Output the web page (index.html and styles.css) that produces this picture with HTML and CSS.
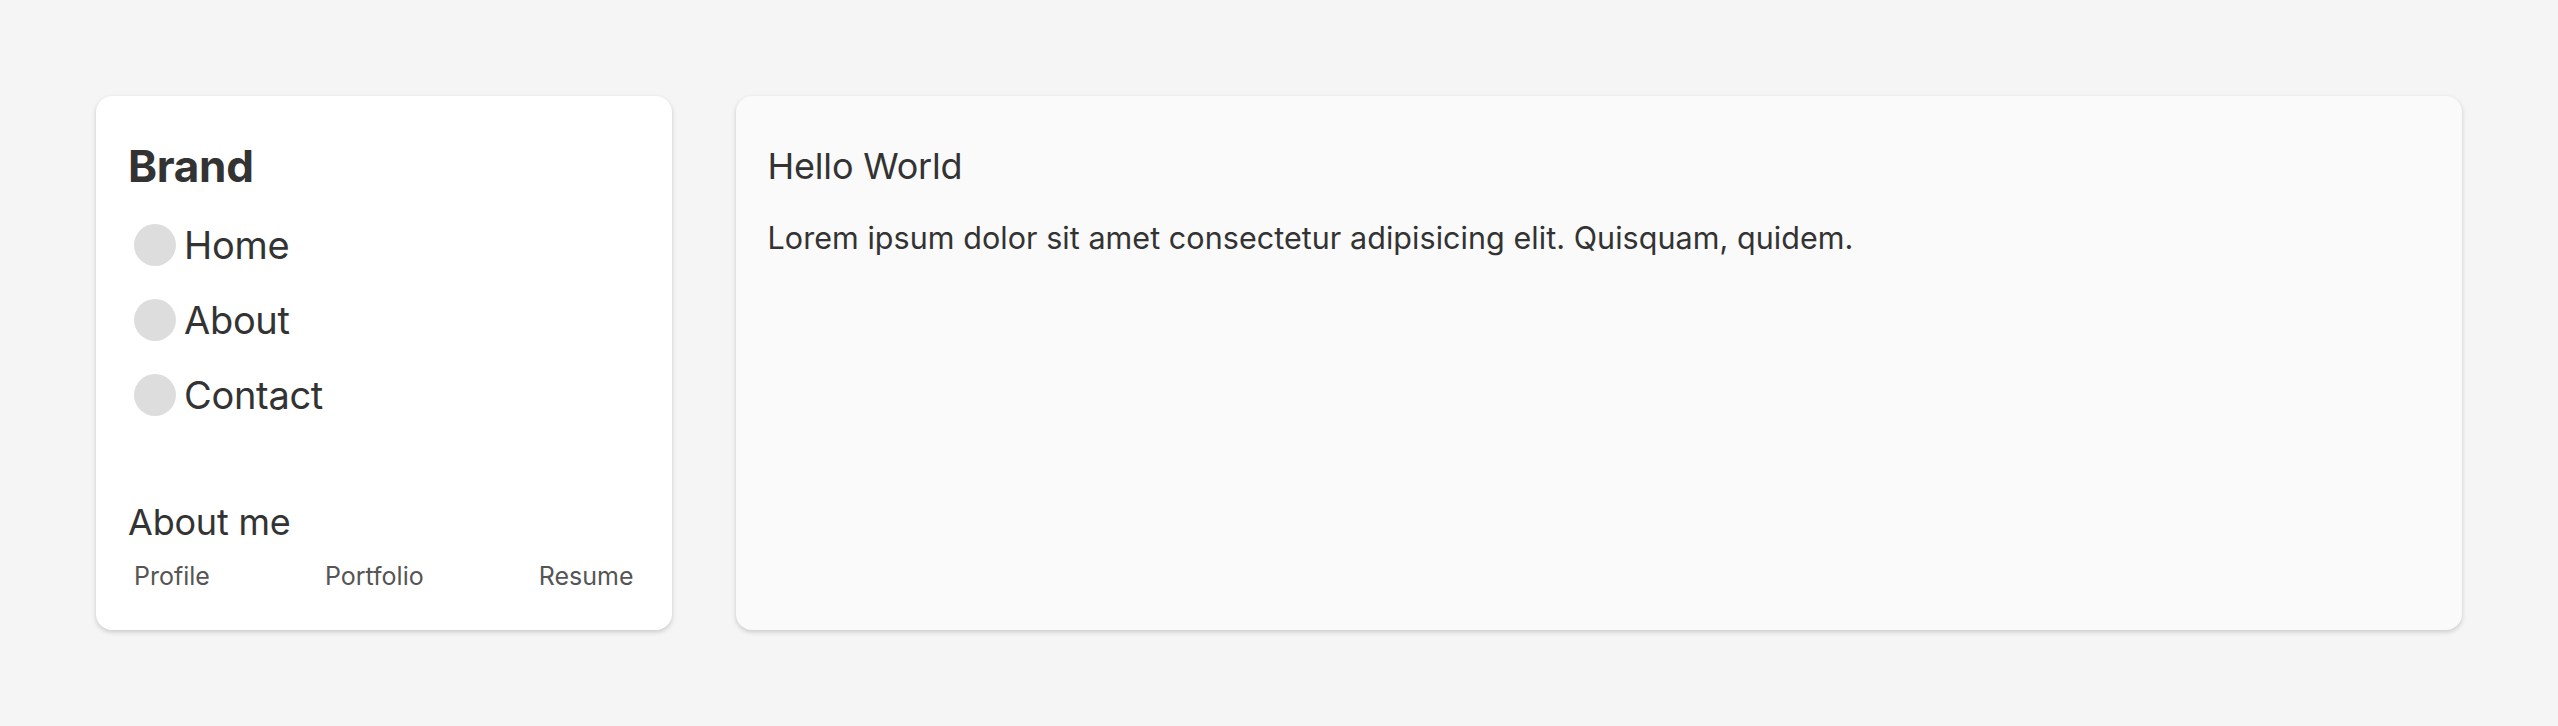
FILE: index.html
```html
<!DOCTYPE html>
<html lang="en">
<head>
<meta charset="utf-8">
<title>Brand</title>
<link rel="stylesheet" href="styles.css">
</head>
<body>
<div class="layout">
  <aside class="sidebar card">
    <div class="top">
      <h1 class="brand">Brand</h1>
      <ul class="nav">
        <li class="nav-item"><span class="dot"></span><span class="nav-label">Home</span></li>
        <li class="nav-item"><span class="dot"></span><span class="nav-label">About</span></li>
        <li class="nav-item"><span class="dot"></span><span class="nav-label">Contact</span></li>
      </ul>
    </div>
    <div class="about">
      <h2 class="about-title">About me</h2>
      <div class="links">
        <a class="link">Profile</a>
        <a class="link">Portfolio</a>
        <a class="link">Resume</a>
      </div>
    </div>
  </aside>
  <main class="main card">
    <h2 class="title">Hello World</h2>
    <p class="text">Lorem ipsum dolor sit amet consectetur adipisicing elit. Quisquam, quidem.</p>
  </main>
</div>
</body>
</html>
```

FILE: styles.css
```css
* { box-sizing: border-box; }
html, body { margin: 0; padding: 0; }
body {
  background: #f5f5f5;
  font-family: Inter, "Noto Sans", "Liberation Sans", sans-serif;
  color: #333333;
  height: 726px;
}
.layout {
  display: grid;
  grid-template-columns: 1fr 3fr;
  gap: 64px;
  padding: 96px;
  height: 726px;
}
.card {
  border-radius: 16px;
  box-shadow: 0 2px 5px rgba(0, 0, 0, 0.18);
  padding: 32px;
}
.sidebar {
  background: #ffffff;
  display: flex;
  flex-direction: column;
  justify-content: space-between;
}
.brand {
  margin: 0;
  font-size: 44px;
  font-weight: 700;
  line-height: 56px;
  letter-spacing: -0.3px;
  padding-top: 10px;
}
.nav {
  list-style: none;
  margin: 30px 0 0;
  padding: 0;
  display: flex;
  flex-direction: column;
  gap: 33px;
}
.nav-item {
  display: flex;
  align-items: center;
  gap: 8px;
  padding-left: 6px;
  height: 42px;
}
.dot {
  width: 42px;
  height: 42px;
  border-radius: 50%;
  background: #dddddd;
  flex: none;
}
.nav-label {
  font-size: 38px;
  line-height: 42px;
  letter-spacing: -0.3px;
}
.about-title {
  margin: 0;
  font-size: 36px;
  font-weight: 400;
  line-height: 44px;
  letter-spacing: -0.2px;
}
.links {
  display: flex;
  justify-content: space-between;
  margin-top: 15px;
  margin-bottom: 5px;
}
.link {
  font-size: 25px;
  line-height: 34px;
  color: #555555;
  padding: 0 6px;
}
.main {
  background: #fafafa;
}
.title {
  margin: 0;
  padding-top: 16px;
  font-size: 36px;
  font-weight: 400;
  line-height: 44px;
  letter-spacing: -0.2px;
}
.text {
  margin: 30px 0 0;
  font-size: 30.5px;
  line-height: 40px;
  letter-spacing: 0.05px;
}
```
